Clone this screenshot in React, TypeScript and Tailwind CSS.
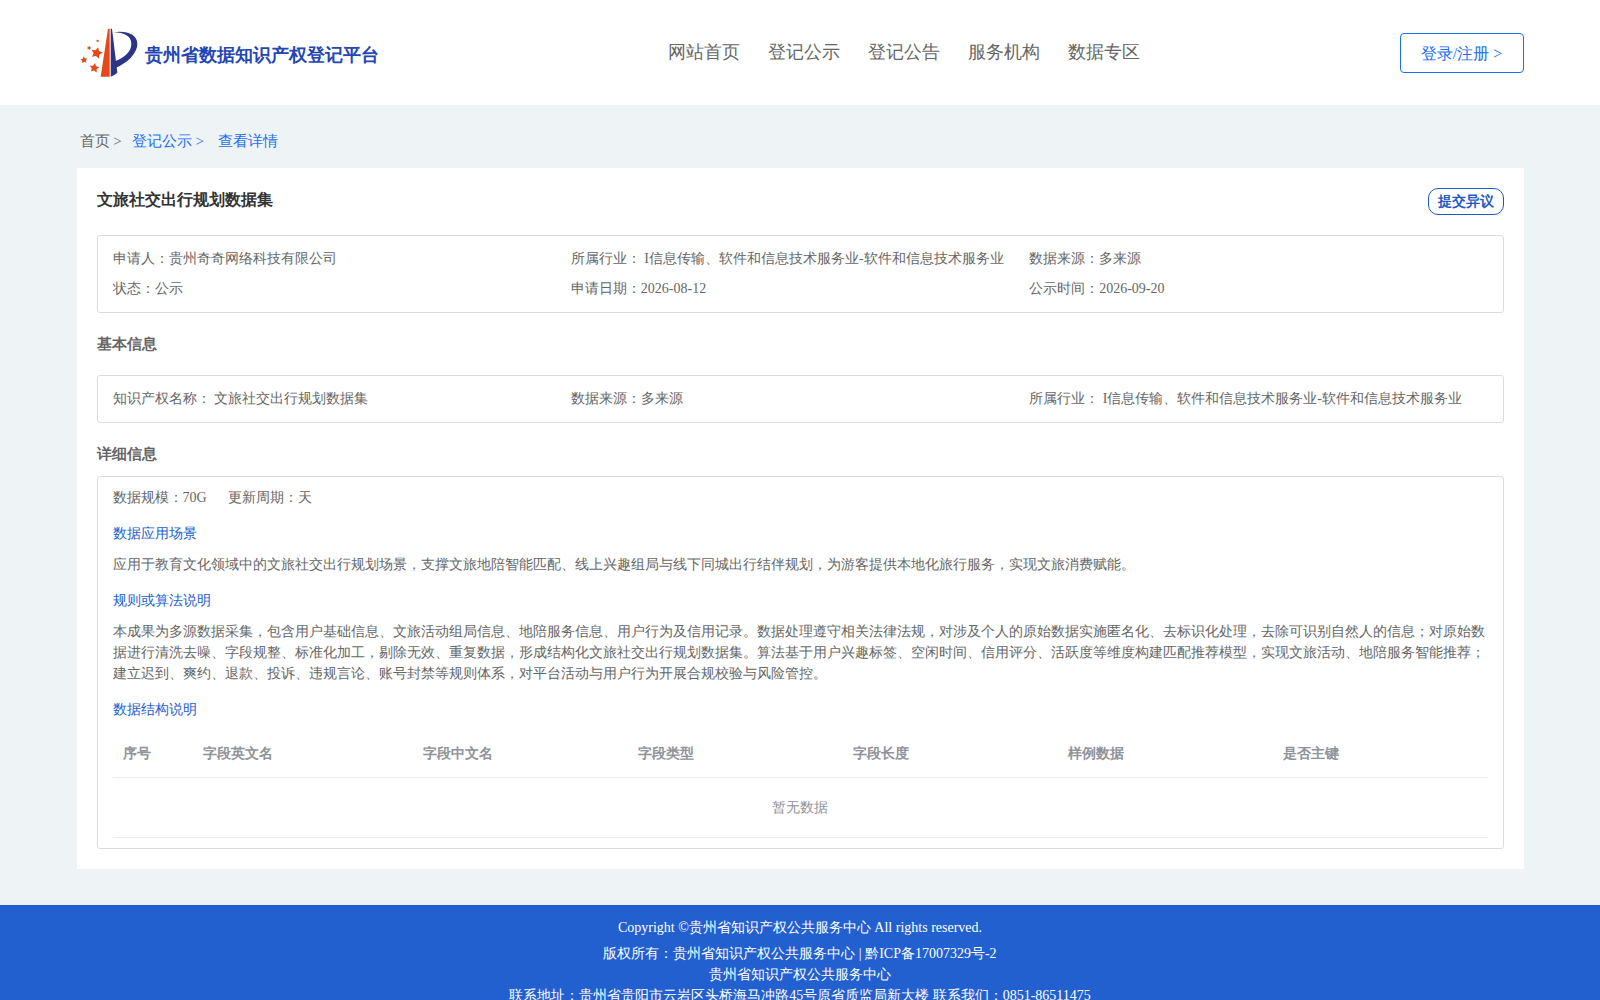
import React from 'react';

interface InfoItem {
  label: string;
  value: string;
}

const navItems = ['网站首页', '登记公示', '登记公告', '服务机构', '数据专区'];

const summary: InfoItem[] = [
  { label: '申请人：', value: '贵州奇奇网络科技有限公司' },
  { label: '所属行业： ', value: 'I信息传输、软件和信息技术服务业-软件和信息技术服务业' },
  { label: '数据来源：', value: '多来源' },
  { label: '状态：', value: '公示' },
  { label: '申请日期：', value: '2026-08-12' },
  { label: '公示时间：', value: '2026-09-20' },
];

const basicInfo: InfoItem[] = [
  { label: '知识产权名称： ', value: '文旅社交出行规划数据集' },
  { label: '数据来源：', value: '多来源' },
  { label: '所属行业： ', value: 'I信息传输、软件和信息技术服务业-软件和信息技术服务业' },
];

const columns = ['序号', '字段英文名', '字段中文名', '字段类型', '字段长度', '样例数据', '是否主键'];

const stars = [
  { x: 65, y: 93, r: 18, rotate: 14 },
  { x: 58, y: 138, r: 15, rotate: 8 },
  { x: 27, y: 114, r: 11, rotate: -5 },
  { x: 42, y: 78, r: 7, rotate: 20 },
  { x: 68, y: 57, r: 5, rotate: 0 },
];

function Logo() {
  return (
    <svg className="h-[62px] w-[68px] shrink-0" viewBox="6 0 204 186" aria-hidden="true">
      <path d="M99 20h5v144H77z" fill="#e5481a" />
      <path d="M107 20h4l16 132q-8 8-20 12z" fill="#2a3488" />
      <path
        d="M114 31C152 24 187 36 187 65c0 30-32 59-65 72l-2-19c30-12 50-30 49-54-1-22-19-32-55-33z"
        fill="#2a3488"
      />
      {stars.map((s) => (
        <path
          key={s.x}
          d="M0-1L.3-.4.95-.31.48.16.59.81 0 .5-.59.81-.48.16-.95-.31-.3-.4z"
          transform={`translate(${s.x} ${s.y}) rotate(${s.rotate}) scale(${s.r})`}
          fill="#e5481a"
        />
      ))}
    </svg>
  );
}

function InfoGrid({ items }: { items: InfoItem[] }) {
  return (
    <dl className="grid grid-cols-3 rounded-[3px] border border-[#dcdcdc] px-[15px] py-2 leading-[30px]">
      {items.map((item) => (
        <div key={item.label} className="flex whitespace-pre">
          <dt>{item.label}</dt>
          <dd>{item.value}</dd>
        </div>
      ))}
    </dl>
  );
}

function Section({ title, children }: { title: string; children: React.ReactNode }) {
  return (
    <section className="mt-[15px]">
      <h3 className="mb-[10px] text-[#2260d0]">{title}</h3>
      {children}
    </section>
  );
}

export default function App() {
  return (
    <div className="min-h-screen bg-[#eef3f6] font-['Liberation_Serif',serif] text-sm leading-[21px] text-[#666]">
      <header className="bg-white">
        <div className="mx-auto flex h-[105px] w-full max-w-[1447px] items-center justify-between">
          <a href="#" className="flex items-center">
            <Logo />
            <span className="pt-1 text-lg font-bold text-[#2346b4]">贵州省数据知识产权登记平台</span>
          </a>
          <nav className="ml-[30px] flex gap-7 pb-0.5 text-lg">
            {navItems.map((item) => (
              <a key={item} href="#">{item}</a>
            ))}
          </nav>
          <button type="button" className="h-10 w-[124px] rounded border border-[#1a6ff0] pt-0.5 text-base text-[#1a6ff0]">
            登录/注册 &gt;
          </button>
        </div>
      </header>

      <main className="mx-auto w-full max-w-[1447px] pb-9">
        {/* 面包屑 */}
        <nav className="flex h-[63px] items-center px-[3px] pt-[10px] text-[15px]">
          <a href="#">首页 &gt;</a>
          <a href="#" className="ml-[10px] text-[#1a6ff0]">登记公示 &gt;</a>
          <span className="ml-[14px] text-[#1a6ff0]">查看详情</span>
        </nav>

        <div className="bg-white p-5">
          <div className="mb-5 flex items-start justify-between">
            <h1 className="text-base leading-6 font-bold text-[#333]">文旅社交出行规划数据集</h1>
            <button type="button" className="h-[27px] w-[76px] rounded-[10px] border border-[#1f5ac4] font-bold text-[#1f5ac4]">
              提交异议
            </button>
          </div>
          <InfoGrid items={summary} />

          <h2 className="mt-5 mb-5 text-[15px] leading-[22px] font-bold">基本信息</h2>
          <InfoGrid items={basicInfo} />

          <h2 className="mt-5 mb-[11px] text-[15px] leading-[22px] font-bold">详细信息</h2>
          <div className="rounded-[3px] border border-[#dcdcdc] px-[15px] py-[10px]">
            <p className="flex gap-[21px]">
              <span>数据规模：70G</span>
              <span>更新周期：天</span>
            </p>
            <Section title="数据应用场景">
              <p>应用于教育文化领域中的文旅社交出行规划场景，支撑文旅地陪智能匹配、线上兴趣组局与线下同城出行结伴规划，为游客提供本地化旅行服务，实现文旅消费赋能。</p>
            </Section>
            <Section title="规则或算法说明">
              <p>本成果为多源数据采集，包含用户基础信息、文旅活动组局信息、地陪服务信息、用户行为及信用记录。数据处理遵守相关法律法规，对涉及个人的原始数据实施匿名化、去标识化处理，去除可识别自然人的信息；对原始数据进行清洗去噪、字段规整、标准化加工，剔除无效、重复数据，形成结构化文旅社交出行规划数据集。算法基于用户兴趣标签、空闲时间、信用评分、活跃度等维度构建匹配推荐模型，实现文旅活动、地陪服务智能推荐；建立迟到、爽约、退款、投诉、违规言论、账号封禁等规则体系，对平台活动与用户行为开展合规校验与风险管控。</p>
            </Section>
            <Section title="数据结构说明">
              <table className="w-full table-fixed text-left text-[#909399]">
                <colgroup>
                  <col className="w-20" />
                  <col className="w-[220px]" />
                </colgroup>
                <thead>
                  <tr className="border-b border-[#ebeef5]">
                    {columns.map((col) => (
                      <th key={col} className="px-[10px] py-3 leading-[23px] font-bold">{col}</th>
                    ))}
                  </tr>
                </thead>
                <tbody>
                  <tr className="border-b border-[#ebeef5]">
                    <td colSpan={7} className="h-[60px] text-center">暂无数据</td>
                  </tr>
                </tbody>
              </table>
            </Section>
          </div>
        </div>
      </main>

      <footer className="bg-[#2260d0] py-3 text-center text-white">
        <p className="mb-[5px]">Copyright ©贵州省知识产权公共服务中心 All rights reserved.</p>
        <p>版权所有：贵州省知识产权公共服务中心 | 黔ICP备17007329号-2</p>
        <p>贵州省知识产权公共服务中心</p>
        <p>联系地址：贵州省贵阳市云岩区头桥海马冲路45号原省质监局新大楼 联系我们：0851-86511475</p>
      </footer>
    </div>
  );
}
